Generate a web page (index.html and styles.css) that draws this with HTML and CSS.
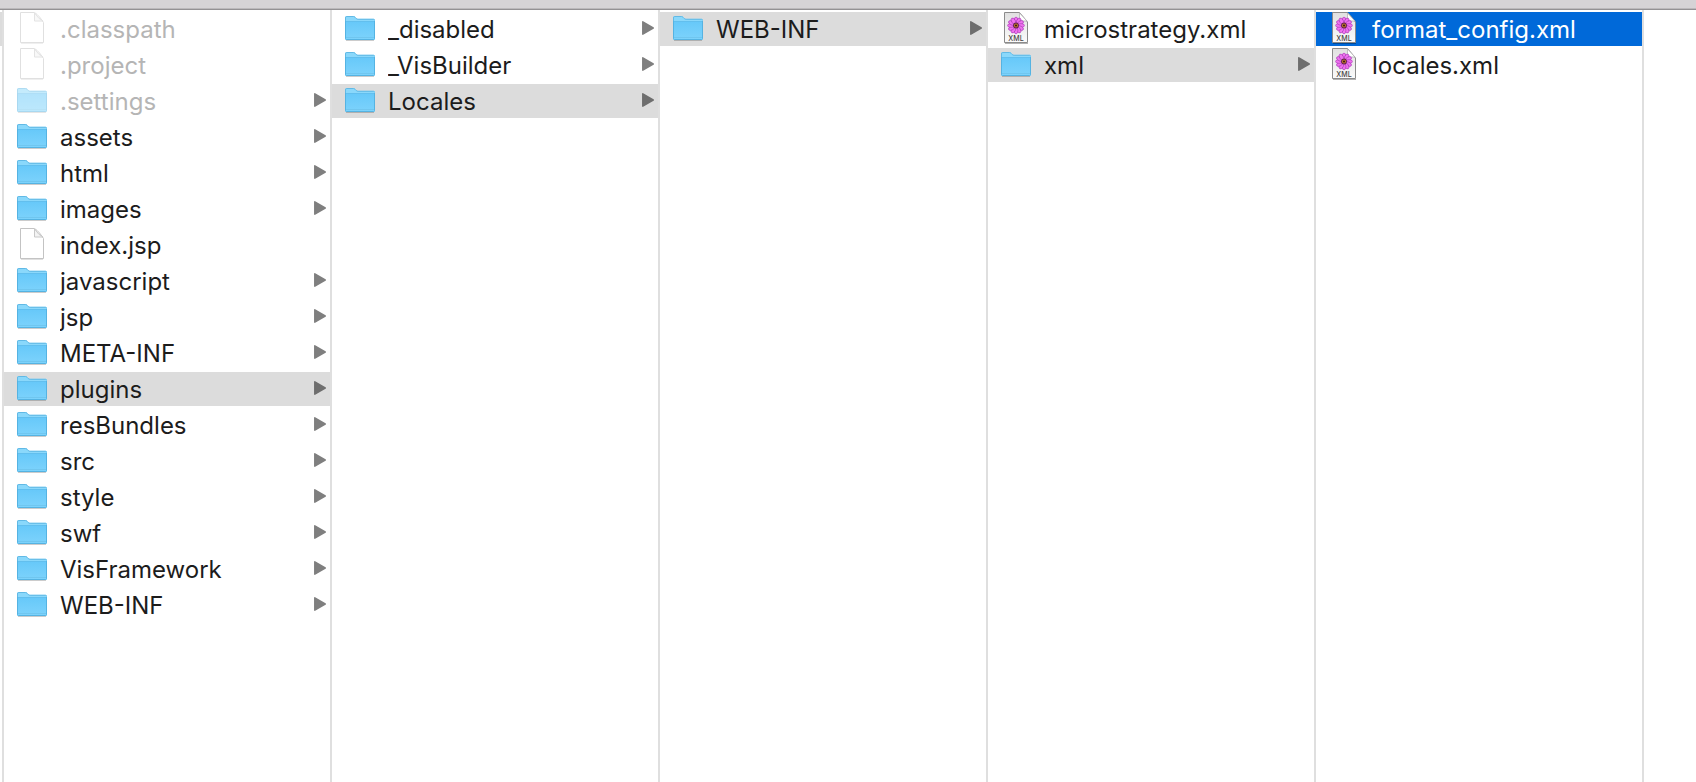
FILE: index.html
```html
<!DOCTYPE html>
<html lang="en">
<head>
<meta charset="utf-8">
<meta name="viewport" content="width=device-width, initial-scale=1">
<title>plugins</title>
<link rel="stylesheet" href="styles.css">
</head>
<body>
<svg class="defs" aria-hidden="true">
  <defs>
    <linearGradient id="folder-fill" x1="0" y1="0" x2="0" y2="1">
      <stop offset="0" stop-color="#66c8f9"/><stop offset="1" stop-color="#7dd3fc"/>
    </linearGradient>
    <linearGradient id="paper-fill" x1="0" y1="0" x2="0" y2="1">
      <stop offset="0" stop-color="#e0e0e0"/><stop offset="1" stop-color="#fbfbfb"/>
    </linearGradient>
    <symbol id="folder" viewBox="0 0 30 32">
      <path d="M1 28.500h28" stroke="#000" stroke-opacity=".2"/>
      <path d="M0 6q0-2 1.500-2h7q1 0 1.800 1l1.200 1.200q.6.6 1.600.6H28.500q1.500 0 1.500 1.500V12H0z" fill="#8ad8fb"/>
      <path d="M.5 11V6q0-1.500 1-1.500h7q1 0 1.500.8l1.200 1.200q.8.800 1.900.8H28.500q1 0 1 1" fill="none" stroke="#61b9e5"/>
      <path d="M0 9h30V26.500q0 1.500-1.500 1.500h-27Q0 28 0 26.500z" fill="url(#folder-fill)"/>
      <path d="M.5 9V26.500q0 1 1 1h27q1 0 1-1V9" fill="none" stroke="#55b3e2"/>
      <path d="M1 9.500h28" stroke="#62bfee"/>
      <path d="M1 25.500h28" stroke="#70c6ef"/>
    </symbol>
    <symbol id="page" viewBox="0 0 30 32">
      <path d="M4 31.500h22" stroke="#000" stroke-opacity=".12"/>
      <path d="M3.500.5H17.500q2.500 1.500 5 4.500t4 5.500V30.500h-23z" fill="#fff" stroke="#c3c3c3"/>
      <path d="M17.500 1v8h8.500Q22 7.500 17.500 1z" fill="#f3f3f3" stroke="#c8c8c8"/>
    </symbol>
    <symbol id="xml-page" viewBox="0 0 30 32">
      <path d="M4 31.500h23" stroke="#000" stroke-opacity=".3"/>
      <path d="M3.500.5H18.500l8 9.500V30.500h-23z" fill="url(#paper-fill)" stroke="#8b8b8b"/>
      <path d="M18.500 1v6.500q0 1.500 1.500 1.500h6z" fill="#fff" stroke="#aaa" stroke-width=".7"/>
      <g stroke="#a435b4" stroke-width=".6" fill="#ef72ef">
        <ellipse cx="15" cy="8.500" rx="1.900" ry="3.400"/>
        <ellipse cx="15" cy="8.500" rx="1.900" ry="3.400" transform="rotate(30 15 13.500)"/>
        <ellipse cx="15" cy="8.500" rx="1.900" ry="3.400" transform="rotate(60 15 13.500)"/>
        <ellipse cx="15" cy="8.500" rx="1.900" ry="3.400" transform="rotate(90 15 13.500)"/>
        <ellipse cx="15" cy="8.500" rx="1.900" ry="3.400" transform="rotate(120 15 13.500)"/>
        <ellipse cx="15" cy="8.500" rx="1.900" ry="3.400" transform="rotate(150 15 13.500)"/>
        <ellipse cx="15" cy="8.500" rx="1.900" ry="3.400" transform="rotate(180 15 13.500)"/>
        <ellipse cx="15" cy="8.500" rx="1.900" ry="3.400" transform="rotate(210 15 13.500)"/>
        <ellipse cx="15" cy="8.500" rx="1.900" ry="3.400" transform="rotate(240 15 13.500)"/>
        <ellipse cx="15" cy="8.500" rx="1.900" ry="3.400" transform="rotate(270 15 13.500)"/>
        <ellipse cx="15" cy="8.500" rx="1.900" ry="3.400" transform="rotate(300 15 13.500)"/>
        <ellipse cx="15" cy="8.500" rx="1.900" ry="3.400" transform="rotate(330 15 13.500)"/>
      </g>
      <circle cx="15" cy="13.500" r="2.900" fill="#61204f"/>
      <circle cx="15" cy="13.500" r="2" fill="#c77a2d"/>
      <circle cx="15" cy="13.500" r="1" fill="#30150e"/>
      <text x="15" y="29" text-anchor="middle" class="badge">XML</text>
    </symbol>
    <symbol id="arrow" viewBox="0 0 12 14">
      <path d="M.8.800 11.200 7 .8 13.200z" fill="currentColor" stroke="currentColor" stroke-width="1.500" stroke-linejoin="round"/>
    </symbol>
  </defs>
</svg>
<div class="browser">
  <header class="toolbar-edge"></header>
  <main class="columns">
    <div class="column parent"><div class="parent-selection"></div></div>
    <ul class="column" id="c1" aria-label="Web application"></ul>
    <ul class="column" id="c2" aria-label="plugins"></ul>
    <ul class="column" id="c3" aria-label="Locales"></ul>
    <ul class="column" id="c4" aria-label="WEB-INF"></ul>
    <ul class="column" id="c5" aria-label="xml"></ul>
    <div class="column last"></div>
  </main>
</div>
<script src="columns.js"></script>
</body>
</html>
```
FILE: styles.css
```css
* {
  box-sizing: border-box;
}

body {
  margin: 0;
  background: #fff;
  color: #1c1c1c;
  font-family: Inter, "Liberation Sans", sans-serif;
  font-size: 24px;
}

.defs {
  position: absolute;
  width: 0;
  height: 0;
}

.browser {
  display: flex;
  flex-direction: column;
  min-height: 100vh;
}

.toolbar-edge {
  height: 10px;
  background: #d6d3d6;
  border-bottom: 1px solid #949194;
  box-shadow: inset 0 -1px #bbb8bb;
}

.columns {
  flex: 1;
  display: grid;
  grid-template-columns: 4px repeat(5, minmax(0, 328fr)) minmax(0, 52fr);
}

.column {
  display: flex;
  flex-direction: column;
  gap: 2px;
  margin: 0;
  padding: 2px 0;
  list-style: none;
  border-right: 2px solid #dfdfdf;
}

.last {
  border-right: 0;
}

.parent-selection {
  height: 34px;
  background: #dcdcdc;
}

.row {
  display: flex;
  align-items: center;
  gap: 13px;
  width: 100%;
  height: 34px;
  padding: 0 4px 2px 13px;
  border: 0;
  background: none;
  color: inherit;
  font: inherit;
  line-height: 28px;
  text-align: left;
}

.open {
  background: #dcdcdc;
}

.selected {
  background: #0069d9;
  color: #fff;
}

.icon {
  flex: none;
  width: 30px;
  height: 32px;
}

.name {
  flex: 1;
  min-width: 0;
  padding-top: 4px;
  overflow: hidden;
  white-space: nowrap;
  text-overflow: ellipsis;
}

.arrow {
  flex: none;
  width: 12px;
  height: 14px;
  color: #7f7f7f;
}

.open .arrow {
  color: #6e6e6e;
}

.dimmed .icon {
  opacity: 0.5;
}

.dimmed .name {
  color: #b5b5b5;
}

.badge {
  fill: #444;
  font-family: Inter, "Liberation Sans", sans-serif;
  font-size: 7px;
  font-weight: 500;
}
```
FILE: columns.js
```js
// Each entry: name, icon, state classes.
const columns = {
  c1: [
    [".classpath", "page", "dimmed"],
    [".project", "page", "dimmed"],
    [".settings", "folder", "dimmed"],
    ["assets", "folder"],
    ["html", "folder"],
    ["images", "folder"],
    ["index.jsp", "page"],
    ["javascript", "folder"],
    ["jsp", "folder"],
    ["META-INF", "folder"],
    ["plugins", "folder", "open"],
    ["resBundles", "folder"],
    ["src", "folder"],
    ["style", "folder"],
    ["swf", "folder"],
    ["VisFramework", "folder"],
    ["WEB-INF", "folder"]
  ],
  c2: [
    ["_disabled", "folder"],
    ["_VisBuilder", "folder"],
    ["Locales", "folder", "open"]
  ],
  c3: [["WEB-INF", "folder", "open"]],
  c4: [
    ["microstrategy.xml", "xml-page"],
    ["xml", "folder", "open"]
  ],
  c5: [
    ["format_config.xml", "xml-page", "selected"],
    ["locales.xml", "xml-page"]
  ]
};

for (const [id, items] of Object.entries(columns)) {
  document.getElementById(id).innerHTML = items.map(([name, icon, state = ""]) => `
    <li><button type="button" class="row ${state}">
      <svg class="icon" aria-hidden="true"><use href="#${icon}"/></svg>
      <span class="name">${name}</span>
      ${icon === "folder" ? '<svg class="arrow" aria-hidden="true"><use href="#arrow"/></svg>' : ""}
    </button></li>`).join("");
}
```
